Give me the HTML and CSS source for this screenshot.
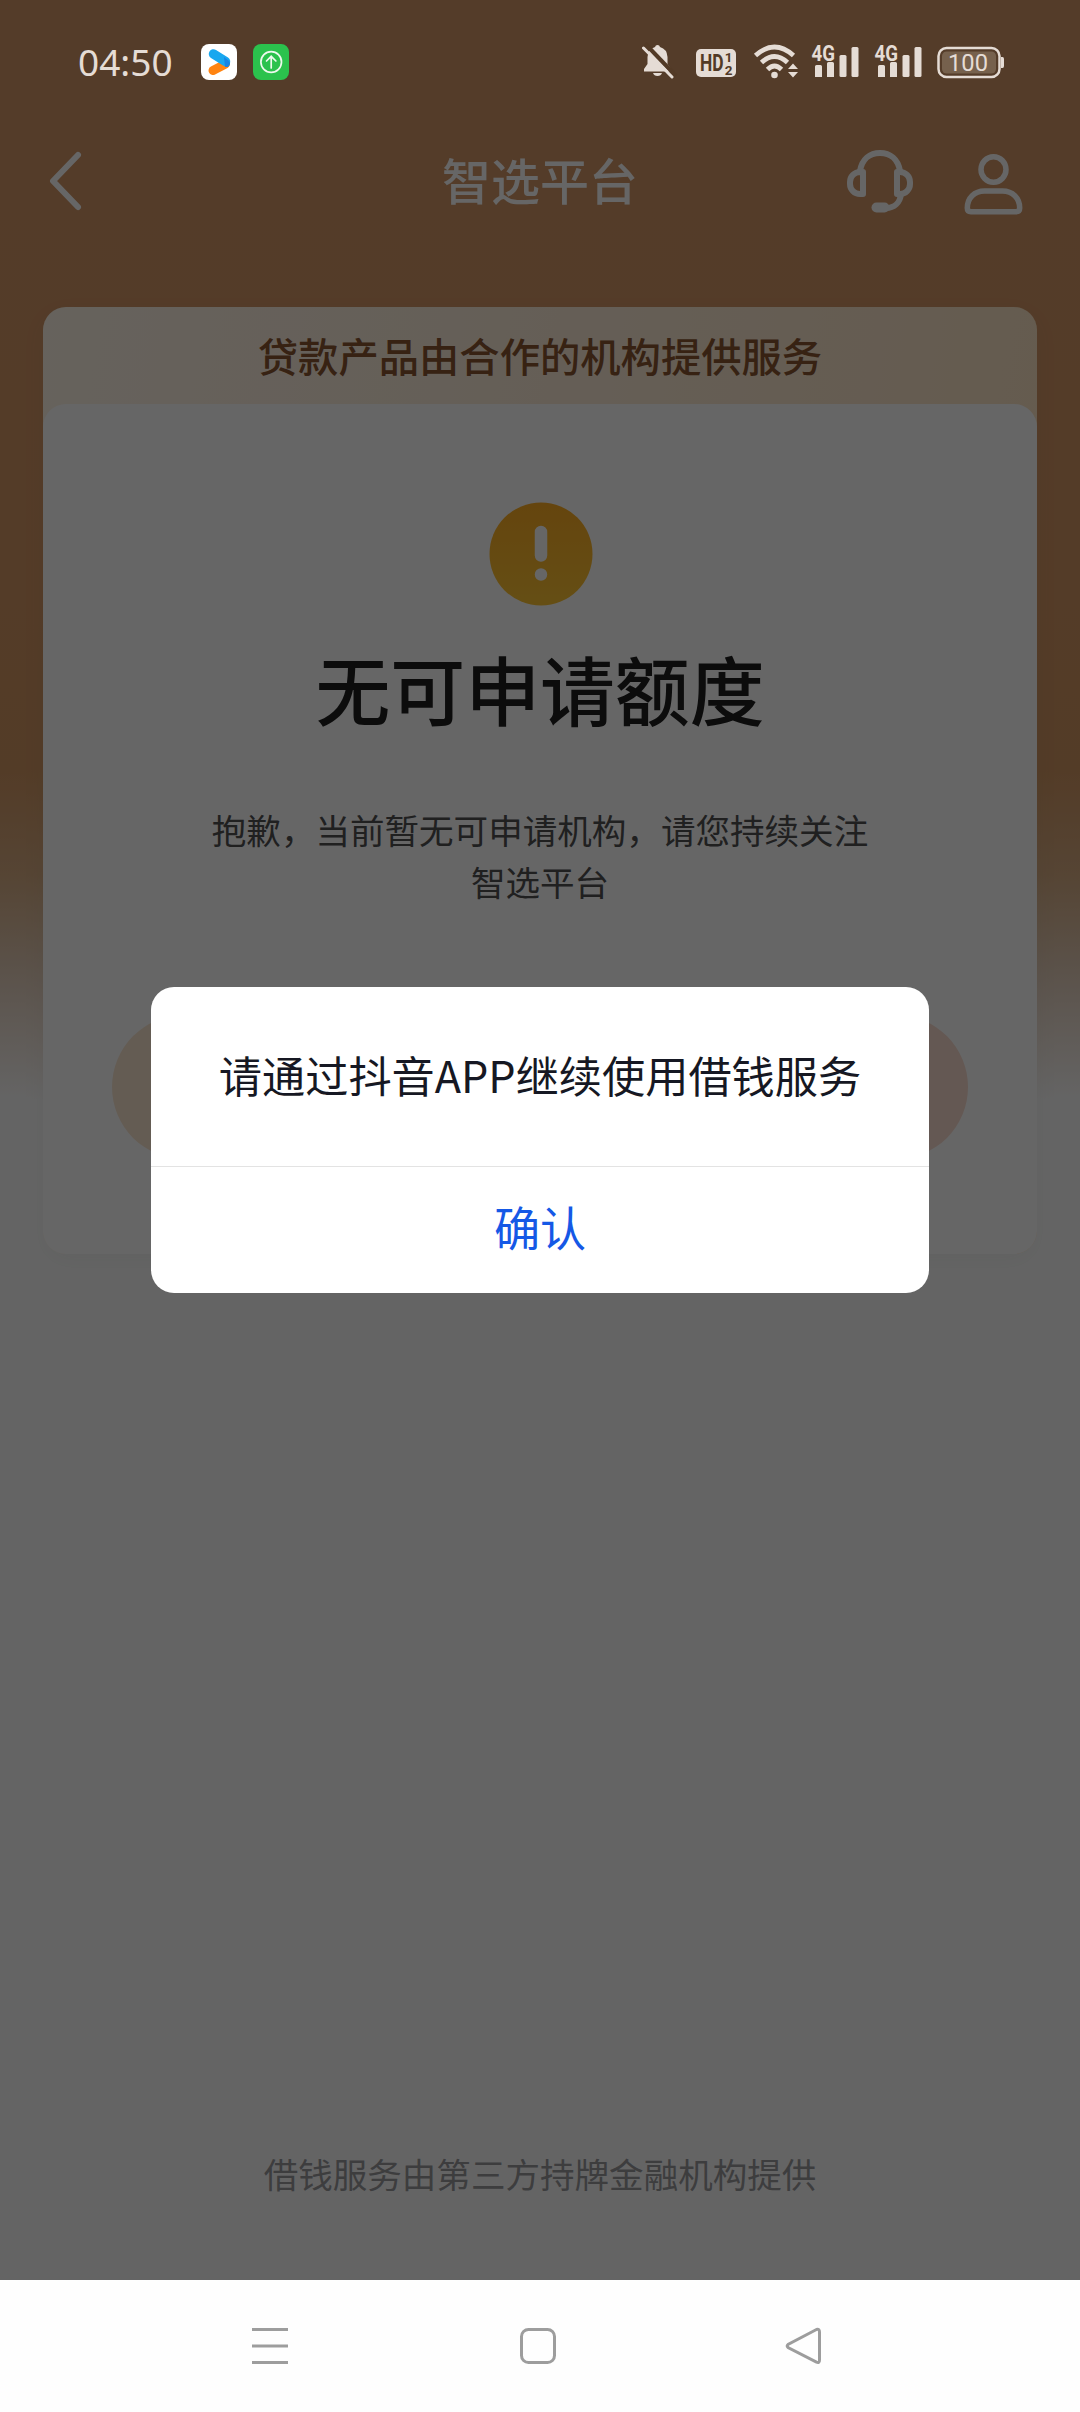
FILE: index.html
```html
<!DOCTYPE html>
<html lang="zh-CN">
<head>
<meta charset="utf-8">
<title>智选平台</title>
<link rel="stylesheet" href="styles.css">
</head>
<body>
<div class="screen">
  <main class="page">
    <header class="header">
      <svg class="back" viewBox="0 0 40 64" fill="none" stroke="currentColor" stroke-width="6" stroke-linecap="round" stroke-linejoin="round"><path d="M32 6 7 32 32 58"/></svg>
      <h1 class="header-title">智选平台</h1>
      <div class="header-actions">
        <svg class="action" viewBox="0 0 66 64" fill="none" stroke="currentColor" stroke-width="6" stroke-linejoin="round"><path d="M13 22C15 10 23 4 33 4S51 10 53 22"/><path d="M16 23H13A10 10 0 0 0 3 33V35A10 10 0 0 0 13 45H16Z"/><path d="M50 23H53A10 10 0 0 1 63 33V35A10 10 0 0 1 53 45H50Z"/><path d="M54 45C53 54 47 59 39 59"/><path d="M29.500 58.500H37.500" stroke-width="10" stroke-linecap="round"/></svg>
        <svg class="action user" viewBox="0 0 58 61" fill="none" stroke="currentColor" stroke-width="5.500" stroke-linejoin="round"><ellipse cx="29" cy="15.500" rx="12.500" ry="12.700"/><path d="M20 37H38C48 37 55.200 44 55.200 54Q55.200 57.700 51.500 57.700H6.500Q2.800 57.700 2.800 54C2.800 44 10 37 20 37Z"/></svg>
      </div>
    </header>

    <section class="offer">
      <p class="offer-banner">贷款产品由合作的机构提供服务</p>
      <div class="card">
        <svg class="alert" viewBox="0 0 104 104"><defs><linearGradient id="amber" x1="0" y1="0" x2="0" y2="1"><stop offset="0" stop-color="#fcac24"/><stop offset="1" stop-color="#fcc434"/></linearGradient></defs><circle class="alert-disc" cx="52" cy="52" r="51.500"/><path d="M52 30V53.500M52 72.500V72.600" stroke="#fff" stroke-width="12.500" stroke-linecap="round"/></svg>
        <h2 class="card-title">无可申请额度</h2>
        <p class="card-text">抱歉，当前暂无可申请机构，请您持续关注<br>智选平台</p>
        <div class="card-button"></div>
      </div>
    </section>

    <footer class="footer">借钱服务由第三方持牌金融机构提供</footer>
  </main>

  <div class="overlay">
    <div class="dialog" role="dialog">
      <p class="dialog-message">请通过抖音APP继续使用借钱服务</p>
      <button class="dialog-confirm">确认</button>
    </div>
  </div>

  <div class="status">
    <div class="status-left">
      <span class="clock">04:50</span>
      <svg class="app" viewBox="0 0 36 36"><rect width="36" height="36" rx="8" fill="#fff"/><path d="M12 26.500 24.500 20" stroke="#ff8412" stroke-width="9" stroke-linecap="round"/><path d="M12.500 10 24.500 17.500" stroke="#18a7ef" stroke-width="9.500" stroke-linecap="round"/><path d="M23 13 28 17Q30.500 20 27 23L24 23Z" fill="#1784e4"/></svg>
      <svg class="app" viewBox="0 0 36 36"><rect width="36" height="36" rx="8" fill="#2bc24d"/><g fill="none" stroke="#edf9ed" stroke-width="1.700" stroke-linecap="round"><circle cx="18.200" cy="18" r="10.300"/><path d="M18.200 24V12.500M13.500 17 18.200 12.300 22.900 17"/></g></svg>
    </div>
    <svg class="status-icons" viewBox="642 40 364 42" fill="currentColor">
      <path d="M657.500 45Q659.500 45 660 47Q667 49 667.500 57V64L671 69V71.500H644V69L647.500 64V57Q648 49 655 47Q655.500 45 657.500 45ZM653 73H662Q661 76 657.500 76T653 73Z"/>
      <path d="M645 43.500 676 76" stroke="#523a26" stroke-width="4"/><path d="M643.500 48 672 77" stroke="currentColor" stroke-width="3" stroke-linecap="round"/>
      <rect x="696" y="49" width="40" height="28" rx="5"/>
      <g class="hd"><text x="700" y="71" font-size="23" textLength="23.500" lengthAdjust="spacingAndGlyphs">HD</text><text x="724.800" y="61.800" font-size="13.500">1</text><text x="724.800" y="74.500" font-size="13.500">2</text></g>
      <g fill="none" stroke="currentColor" stroke-width="4.800"><path d="M755.500 55.500Q774.500 38.500 793.500 55.500"/><path d="M761.500 62.500Q774.500 50.500 787.500 62.500"/><path d="M767.500 69.500Q774.500 62.500 781.500 69.500"/></g><circle cx="774.500" cy="75" r="3.300"/>
      <path d="M788 69 793 63.500 798 69ZM788 72 793 77.500 798 72Z"/>
      <g id="signal"><path d="M815 66.500Q815 65 816.500 65H820.500Q822 65 822 66.500V77H815ZM827 63.500Q827 62 828.500 62H832.500Q834 62 834 63.500V77H827Z"/><text class="network" x="811.500" y="60.800" font-size="22" textLength="23.500" lengthAdjust="spacingAndGlyphs">4G</text><rect x="839.500" y="55" width="7" height="22" rx="1.500"/><rect x="851.500" y="47" width="7" height="30" rx="1.500"/></g>
      <use href="#signal" x="63"/>
      <rect x="938.500" y="48" width="61" height="29" rx="8" fill="none" stroke="currentColor" stroke-width="2.500"/><rect x="942" y="51.500" width="54" height="22" rx="4.500" fill="#76614d"/><path d="M1001 57H1002.500Q1004 57 1004 59V66Q1004 68 1002.500 68H1001Z"/><text class="level" x="948" y="71.300" font-size="24.500" textLength="40" lengthAdjust="spacingAndGlyphs">100</text>
    </svg>
  </div>

  <nav class="system-nav">
    <svg viewBox="0 0 40 40"><path d="M2 3.500H38M2 20H38M2 36.500H38"/></svg>
    <svg viewBox="0 0 40 40"><rect x="4.500" y="3.500" width="33" height="33" rx="7"/></svg>
    <svg viewBox="0 0 40 40"><path d="M33.500 3.500 5 18.500Q3.500 20 5 21.500L33.500 36.200Q36.500 37.500 36.500 34V6Q36.500 2.500 33.500 3.500Z"/></svg>
  </nav>
</div>
</body>
</html>
```
FILE: styles.css
```css
* { box-sizing: border-box; }

body {
  margin: 0;
  font-family: "Noto Sans CJK SC", sans-serif;
}

h1, h2, p { margin: 0; }

.screen {
  position: relative;
  width: 1080px;
  height: 2412px;
  overflow: hidden;
  display: flex;
  flex-direction: column;
}

.page {
  height: 2280px;
  padding: 120px 43px 0;
  display: flex;
  flex-direction: column;
  background: linear-gradient(180deg, #d29667 0, #d29664 600px, #d09662 770px, #d6ac83 875px, #e2cbb6 965px, #f0e4da 1035px, #fbfbfb 1100px, #fbfbfb 100%);
}

.header {
  height: 187px;
  padding: 0 14px 65px 3px;
  display: grid;
  grid-template-columns: 1fr auto 1fr;
  align-items: center;
  color: #fff;
}

.back {
  width: 40px;
  height: 64px;
}

.header-title {
  margin: 0 0 5px 11px;
  font-size: 48.960px;
  font-weight: 500;
  line-height: 60px;
}

.header-actions {
  display: flex;
  justify-content: flex-end;
  align-items: center;
  gap: 51px;
}

.action {
  width: 66px;
  height: 64px;
}

.user {
  width: 59px;
  height: 61px;
  margin-top: 7px;
}

.offer {
  height: 947px;
  display: flex;
  flex-direction: column;
  border-radius: 23px;
  background: linear-gradient(100deg, #fff5e8 0, #fcebd6 50%, #fce2c0 100%);
  box-shadow: 0 8px 24px rgba(90, 110, 100, .05);
}

.offer-banner {
  height: 97px;
  text-align: center;
  font-size: 40.320px;
  font-weight: 500;
  line-height: 96px;
  color: #8a5530;
}

.card {
  flex: 1;
  display: flex;
  flex-direction: column;
  align-items: center;
  padding-top: 98px;
  border-radius: 23px;
  background: #fff;
}

.alert {
  width: 104px;
  height: 104px;
  margin-left: 2px;
}

.alert-disc { fill: url(#amber); }

.card-title {
  margin-top: 32px;
  font-size: 74.880px;
  font-weight: 500;
  line-height: 100px;
  color: #202020;
}

.card-text {
  margin-top: 65px;
  font-size: 34.560px;
  line-height: 52px;
  text-align: center;
  color: #505052;
}

.card-button {
  width: 856px;
  height: 144px;
  margin-top: 108px;
  border-radius: 72px;
  background: linear-gradient(90deg, #fae6d0, #fadccf);
}

.footer {
  margin-top: auto;
  padding-bottom: 81px;
  font-size: 34.560px;
  line-height: 52px;
  text-align: center;
  color: #98989b;
}

.overlay {
  position: absolute;
  inset: 0 0 132px;
  display: flex;
  justify-content: center;
  align-items: center;
  background: rgba(0, 0, 0, .6);
}

.dialog {
  width: 778px;
  height: 306px;
  display: flex;
  flex-direction: column;
  border-radius: 23px;
  background: #fff;
}

.dialog-message {
  height: 179px;
  line-height: 174px;
  text-align: center;
  font-size: 43.200px;
  color: #161823;
}

.dialog-confirm {
  flex: 1;
  padding: 0 0 8px;
  border: 0;
  border-top: 1px solid #e3e3e3;
  background: none;
  font: 400 46.080px "Noto Sans CJK SC", sans-serif;
  color: #1558e6;
}

.status {
  position: absolute;
  inset: 0 0 auto;
  height: 122px;
  padding: 40px 74px 0 78px;
  display: flex;
  justify-content: space-between;
  color: #e5dcd5;
}

.status-left {
  display: flex;
  align-items: center;
  height: 44px;
}

.clock {
  width: 123px;
  font-family: "Noto Sans", sans-serif;
  font-size: 37px;
  line-height: 44px;
}

.app {
  width: 36px;
  height: 36px;
  margin-right: 16px;
}

.status-icons {
  width: 364px;
  height: 42px;
}

.hd {
  fill: #523a26;
  font-family: Roboto, sans-serif;
  font-weight: 700;
}

.network {
  font-family: Roboto, sans-serif;
  font-weight: 700;
}

.level {
  font-family: Roboto, sans-serif;
}

.system-nav {
  height: 132px;
  padding: 0 257px 0 250px;
  display: flex;
  justify-content: space-between;
  align-items: center;
  background: #fefefe;
}

.system-nav svg {
  width: 40px;
  height: 40px;
  fill: none;
  stroke: #9d9d9d;
  stroke-width: 3;
}
```
